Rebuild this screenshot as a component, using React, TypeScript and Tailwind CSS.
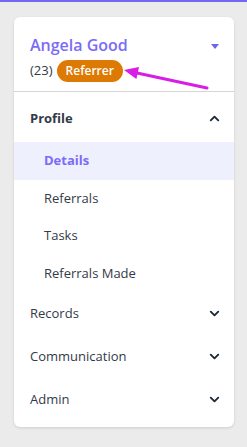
import { ChevronDown, ChevronUp } from 'lucide-react';

const subItems = ['Details', 'Referrals', 'Tasks', 'Referrals Made'];
const sections = ['Records', 'Communication', 'Admin'];

export default function App() {
  return (
    <div className="min-h-[447px] w-[247px] bg-[#ebebeb] border-t-2 border-[#7367f0] font-['Open_Sans',sans-serif] text-[#333a48]">
      <div className="ml-[14px] mt-[15px] w-[220px] rounded-md bg-white pb-[6px] shadow-[0_1px_3px_rgba(0,0,0,0.12)]">
        <div className="relative border-b border-[#d6d6d6] pl-4 pr-4 pt-[16px] pb-[9px]">
          <div className="flex items-center justify-between">
            <h1 className="text-[16px] font-semibold text-[#7b6cf6]">Angela Good</h1>
            <svg width="8" height="5" viewBox="0 0 8 5" className="-mr-[1px] mt-[2px]">
              <path d="M0 0h8L4 5z" fill="#6c63f0" />
            </svg>
          </div>
          <div className="mt-[3px] flex items-center gap-1 text-[13px]">
            <span>(23)</span>
            <span className="rounded-full bg-[#dd7a04] px-[9px] py-[3px] text-[12px] leading-4 font-semibold text-white">
              Referrer
            </span>
          </div>
          <svg className="absolute left-[104px] top-[43px]" width="95" height="35" viewBox="0 0 95 35">
            <path d="M19 13 L89 28" stroke="#d81ee6" strokeWidth="3" strokeLinecap="round" />
            <path d="M6 10 L18.4 18.9 L21 7.1 Z" fill="#d81ee6" />
          </svg>
        </div>
        <div className="flex h-[50px] items-center justify-between pl-4 pr-3 pt-[3px]">
          <span className="text-[13px] font-bold">Profile</span>
          <ChevronUp size={15} strokeWidth={3} className="text-[#1f2937]" />
        </div>
        {subItems.map((item, i) => (
          <div
            key={item}
            className={
              i === 0
                ? 'flex h-[37.5px] items-center bg-[#eef0fe] pl-[30px] text-[13px] font-bold text-[#7b6cf6]'
                : 'flex h-[37.5px] items-center pl-[30px] text-[13px]'
            }
          >
            {item}
          </div>
        ))}
        {sections.map((s) => (
          <div key={s} className="flex h-[43px] items-center justify-between pl-4 pr-3">
            <span className="text-[13px]">{s}</span>
            <ChevronDown size={15} strokeWidth={3} className="text-[#1f2937]" />
          </div>
        ))}
      </div>
    </div>
  );
}
